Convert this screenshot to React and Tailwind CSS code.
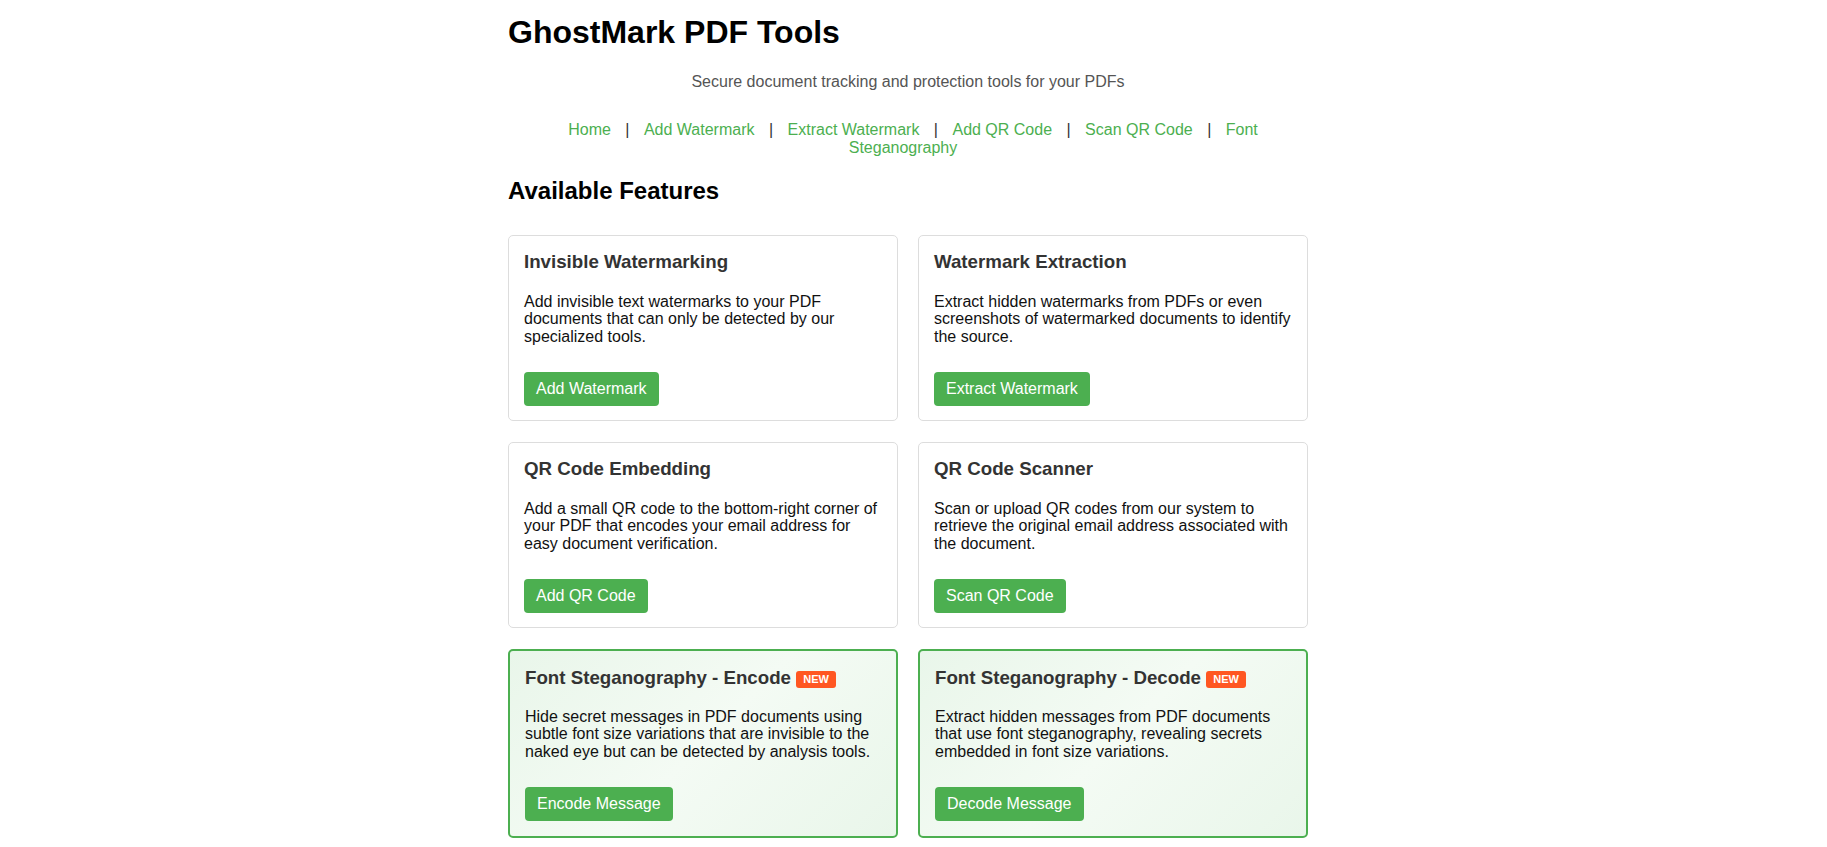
import React from "react";

const features = [
  {
    title: "Invisible Watermarking",
    desc: "Add invisible text watermarks to your PDF documents that can only be detected by our specialized tools.",
    btn: "Add Watermark",
  },
  {
    title: "Watermark Extraction",
    desc: "Extract hidden watermarks from PDFs or even screenshots of watermarked documents to identify the source.",
    btn: "Extract Watermark",
  },
  {
    title: "QR Code Embedding",
    desc: "Add a small QR code to the bottom-right corner of your PDF that encodes your email address for easy document verification.",
    btn: "Add QR Code",
  },
  {
    title: "QR Code Scanner",
    desc: "Scan or upload QR codes from our system to retrieve the original email address associated with the document.",
    btn: "Scan QR Code",
  },
  {
    title: "Font Steganography - Encode",
    desc: "Hide secret messages in PDF documents using subtle font size variations that are invisible to the naked eye but can be detected by analysis tools.",
    btn: "Encode Message",
    isNew: true,
  },
  {
    title: "Font Steganography - Decode",
    desc: "Extract hidden messages from PDF documents that use font steganography, revealing secrets embedded in font size variations.",
    btn: "Decode Message",
    isNew: true,
  },
];

const links = [
  "Home",
  "Add Watermark",
  "Extract Watermark",
  "Add QR Code",
  "Scan QR Code",
  "Font Steganography",
];

function Card({ f }) {
  if (f.isNew) {
    return (
      <div className="rounded-[5px] border-2 border-[#4CAF50] bg-linear-135 from-[#e9f6ea] via-[#f4fbf4] to-[#e9f6ea] px-[15px] pt-[16px] pb-[15px]">
        <h3 className="text-[18.72px] leading-[21.5px] font-bold text-[#333]">
          {f.title}{" "}
          <span className="inline-block align-middle rounded-[3px] bg-[#ff5722] px-[7px] py-[2px] text-[11px] leading-[13px] font-bold text-white">
            NEW
          </span>
        </h3>
        <p className="mt-[19px] text-[16px] leading-[17.5px] text-[#111]">{f.desc}</p>
        <button className="mt-[27px] rounded-[4px] bg-[#4CAF50] px-3 py-2 text-[16px] leading-[18px] text-white">
          {f.btn}
        </button>
      </div>
    );
  }
  return (
    <div className="rounded-[5px] border border-[#ddd] bg-white px-[15px] pt-[15px] pb-[14px]">
      <h3 className="text-[18.72px] leading-[21.5px] font-bold text-[#333]">{f.title}</h3>
      <p className="mt-[20px] text-[16px] leading-[17.5px] text-[#111]">{f.desc}</p>
      <button className="mt-[27px] rounded-[4px] bg-[#4CAF50] px-3 py-2 text-[16px] leading-[18px] text-white">
        {f.btn}
      </button>
    </div>
  );
}

export default function App() {
  return (
    <div className="min-h-screen bg-white font-['Liberation_Sans',Arial,sans-serif] text-black">
      <div className="flex justify-center pr-[11px] pb-[30px]">
        <div className="w-[800px]">
          <h1 className="mt-[14px] text-[32px] leading-[37px] font-bold text-black">
            GhostMark PDF Tools
          </h1>
          <p className="mt-[22px] text-center text-[16px] leading-[18px] text-[#555]">
            Secure document tracking and protection tools for your PDFs
          </p>
          <nav className="mt-[30px] text-center text-[16px] leading-[18px] text-[#333]">
            {links.map((l, i) => (
              <React.Fragment key={l}>
                <a href="#" className="mx-[10px] text-[#4CAF50]">
                  {l}
                </a>
                {i < links.length - 1 ? " | " : null}
              </React.Fragment>
            ))}
          </nav>
          <h2 className="mt-[20px] text-[24px] leading-[28px] font-bold text-black">
            Available Features
          </h2>
          <div className="mt-[30px] grid grid-cols-2 gap-x-5 gap-y-[21px]">
            {features.map((f) => (
              <Card key={f.title} f={f} />
            ))}
          </div>
        </div>
      </div>
    </div>
  );
}
